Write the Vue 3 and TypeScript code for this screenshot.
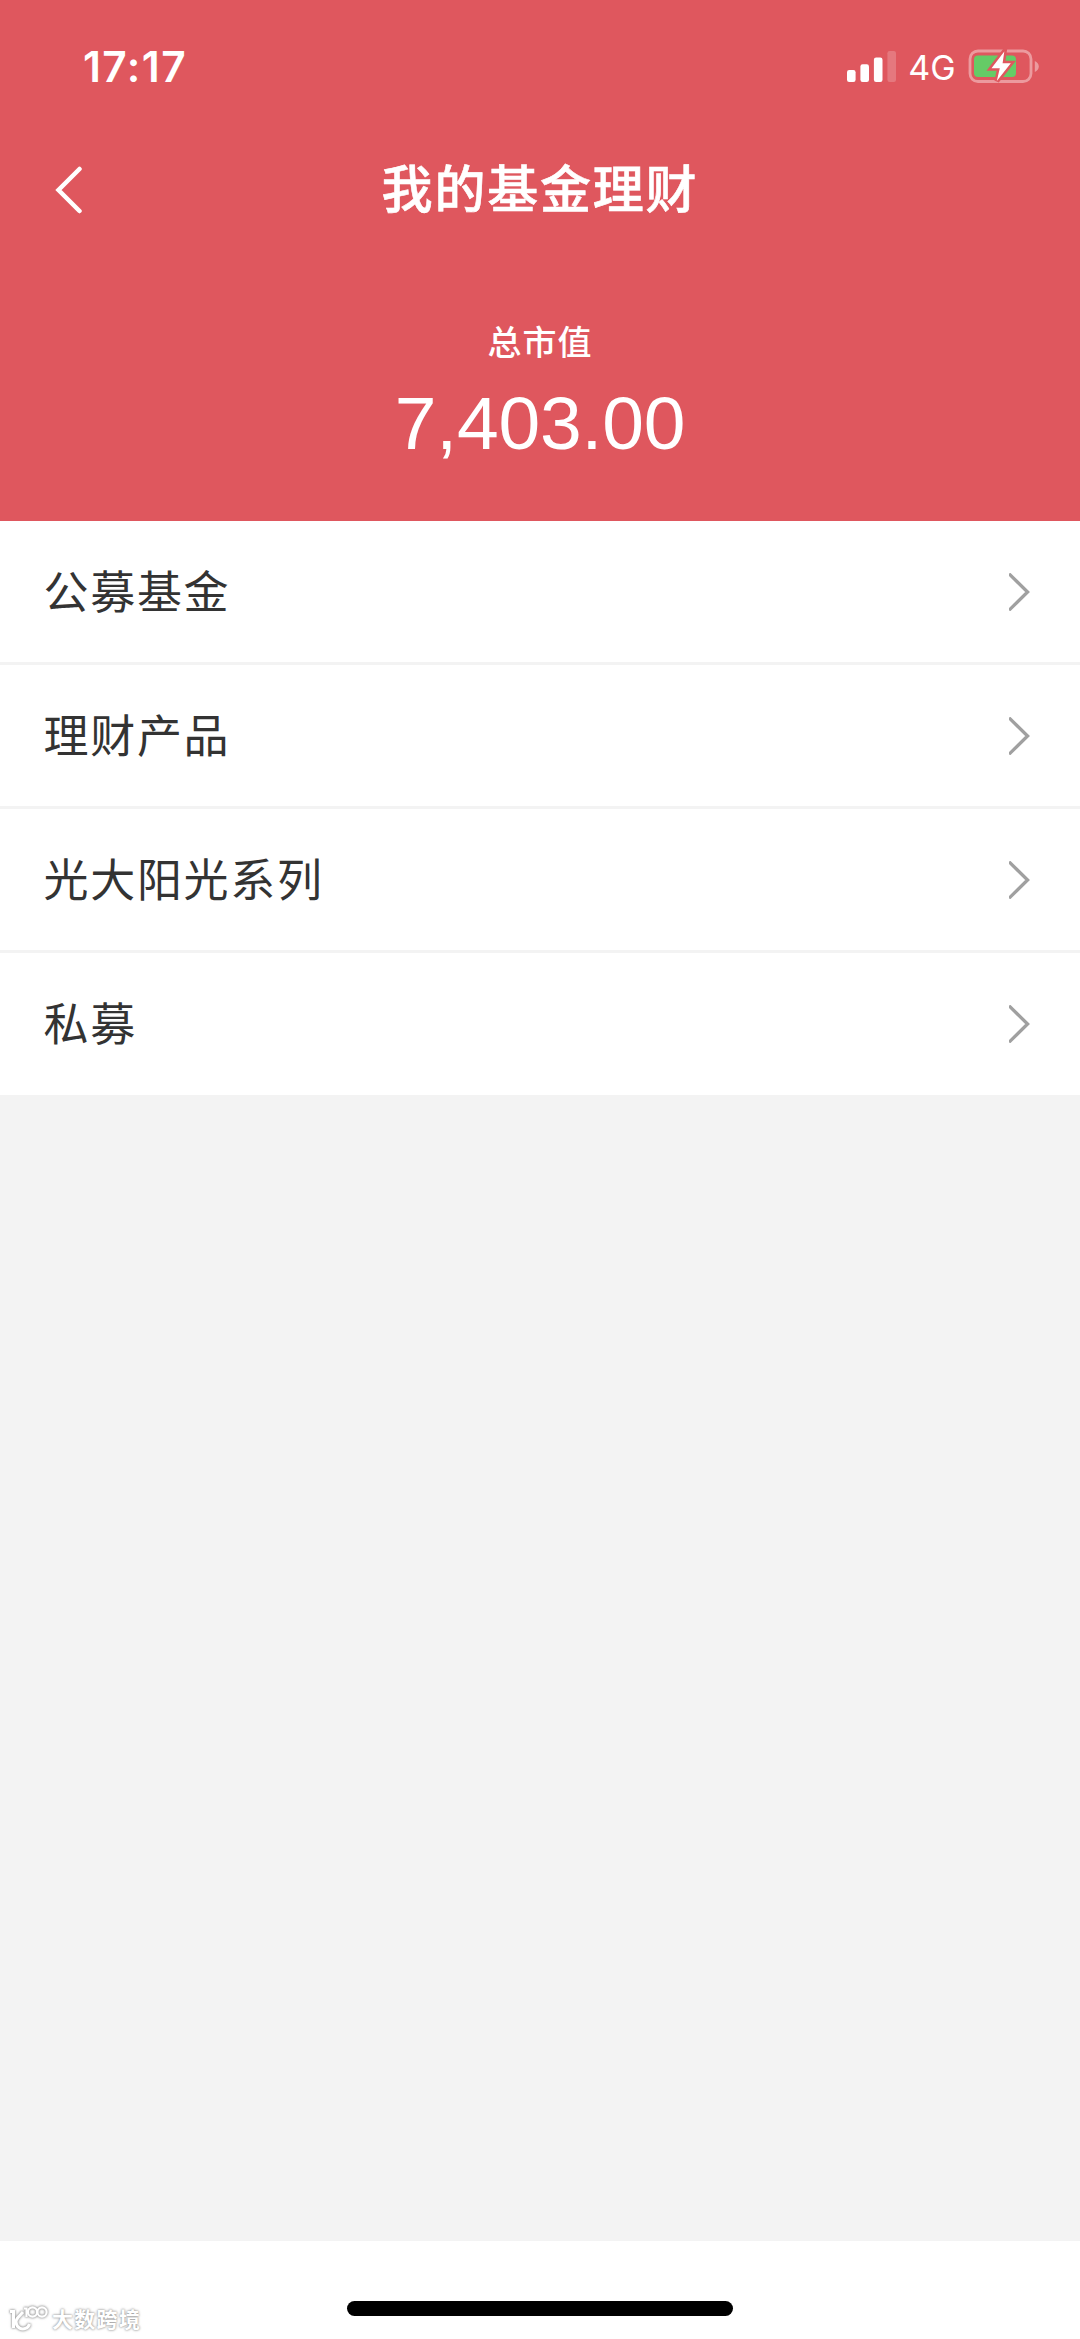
<script setup lang="ts">
interface Category {
  id: string
  name: string
}

const totalValue = '7,403.00'

const categories: Category[] = [
  { id: 'public', name: '公募基金' },
  { id: 'wealth', name: '理财产品' },
  { id: 'sunshine', name: '光大阳光系列' },
  { id: 'private', name: '私募' },
]
</script>

<template>
  <div class="screen">
    <header class="hero">
      <div class="status">
        <span class="time">17:17</span>
        <div class="indicators">
          <svg class="signal" width="50" height="32" viewBox="0 0 50 32" fill="#fff">
            <rect x="0" y="20" width="8.6" height="12" rx="2.2" />
            <rect x="13.4" y="14.2" width="8.6" height="17.8" rx="2.2" />
            <rect x="26.9" y="7.5" width="8.6" height="24.5" rx="2.2" />
            <rect x="40.4" y="1" width="8.6" height="31" rx="2.2" opacity="0.2" />
          </svg>
          <span class="network">4G</span>
          <svg class="battery" width="72" height="36" viewBox="0 0 72 36">
            <rect x="2" y="3" width="61" height="30.5" rx="8" fill="none" stroke="#fff" stroke-opacity="0.4" stroke-width="2.8" />
            <path d="M66.800 13v11c2.400-1 4-3 4-5.500s-1.600-4.500-4-5.500z" fill="#fff" fill-opacity="0.4" />
            <rect x="6" y="7.500" width="42" height="21.500" rx="4" fill="#65cb66" />
            <path d="M36.300 3.500L23.500 20.300h8.300L28.800 33L42.800 15.300H34.600z" fill="#fff" stroke="#df575e" stroke-width="5" paint-order="stroke" />
          </svg>
        </div>
      </div>
      <nav class="navbar">
        <button class="back" aria-label="返回">
          <svg width="30" height="48" viewBox="0 0 30 48" fill="none" stroke="#fff" stroke-width="4.500">
            <path d="M25.500 3L4.500 24L25.500 45" stroke-linecap="round" />
          </svg>
        </button>
        <h1 class="title">我的基金理财</h1>
      </nav>
      <div class="caption">总市值</div>
      <div class="amount">{{ totalValue }}</div>
    </header>

    <ul class="list">
      <li v-for="item in categories" :key="item.id" class="row">
        <span class="name">{{ item.name }}</span>
        <svg width="21" height="38" viewBox="0 0 21 38" fill="none" stroke="#a0a0a0" stroke-width="3.300">
          <path d="M0 0.800L18.600 19L0 37.200" />
        </svg>
      </li>
    </ul>

    <footer class="bottom">
      <div class="home-bar"></div>
      <div class="watermark">
        <svg width="44" height="30" viewBox="0 0 44 30" fill="none" stroke="#fff" stroke-width="3">
          <path d="M3 8.500H6.500V25" />
          <path d="M16 9L11 14.500A6.800 6.800 0 1 0 22.500 21" />
          <path d="M17 5.500H19.500V14" stroke-width="2.200" />
          <circle cx="25.500" cy="9" r="4.600" stroke-width="2.200" />
          <circle cx="35" cy="9" r="4.600" stroke-width="2.200" />
        </svg>
        <span>大数跨境</span>
      </div>
    </footer>
  </div>
</template>

<style>
body {
  margin: 0;
}
</style>

<style scoped>
.screen {
  width: 1080px;
  height: 2339px;
  display: flex;
  flex-direction: column;
  overflow: hidden;
  background: #f3f3f3;
  font-family: "Noto Sans CJK SC", sans-serif;
}

.hero {
  height: 521.400px;
  flex: none;
  background: #df575e;
  color: #fff;
  text-align: center;
}

.status {
  height: 132px;
  box-sizing: border-box;
  display: flex;
  justify-content: space-between;
  padding: 0 40px 0 83px;
  font-family: Inter, sans-serif;
}

.time {
  margin-top: 41px;
  font-size: 42.500px;
  line-height: 51px;
  font-weight: 600;
  letter-spacing: 1.400px;
}

.indicators {
  display: flex;
  align-items: flex-start;
}

.signal {
  margin-top: 50px;
}

.network {
  margin: 47px 0 0 7px;
  width: 56px;
  font-size: 34px;
  line-height: 41px;
  text-align: center;
}

.battery {
  margin: 48px 0 0 8px;
}

.navbar {
  height: 116px;
  display: grid;
  grid-template-columns: 160px 1fr 160px;
  align-items: center;
}

.back {
  width: 30px;
  height: 48px;
  margin-left: 54px;
  padding: 0;
  border: 0;
  background: none;
}

.back svg {
  display: block;
}

.title {
  margin: 0;
  padding-bottom: 8px;
  font-size: 51px;
  line-height: 74px;
  font-weight: 500;
  letter-spacing: 1.800px;
  -webkit-text-stroke: 0.600px #fff;
}

.caption {
  margin-top: 68px;
  font-size: 34px;
  line-height: 50px;
  font-weight: 500;
  letter-spacing: 1px;
}

.amount {
  margin-top: 14px;
  font-family: "Liberation Sans", sans-serif;
  font-size: 75px;
  line-height: 86px;
  letter-spacing: -0.200px;
}

.list {
  flex: none;
  margin: 0;
  padding: 0;
  list-style: none;
  background: #fff;
}

.row {
  box-sizing: border-box;
  height: 144px;
  display: flex;
  align-items: center;
  justify-content: space-between;
  padding: 0 50px 0 43.500px;
  border-bottom: 3px solid #f3f3f3;
  color: #333;
  font-size: 45px;
  letter-spacing: 1.700px;
}

.name {
  padding-bottom: 5px;
}

.row:last-child {
  height: 142px;
  border-bottom: 0;
}

.bottom {
  position: relative;
  display: flow-root;
  height: 98px;
  flex: none;
  margin-top: auto;
  background: #fff;
}

.home-bar {
  width: 386px;
  height: 15px;
  margin: 60px auto 0;
  border-radius: 8px;
  background: #000;
}

.watermark {
  position: absolute;
  left: 7px;
  bottom: 6px;
  display: flex;
  align-items: center;
  gap: 1px;
  color: #fff;
  font-size: 21px;
  line-height: 30px;
  font-weight: 700;
  letter-spacing: 1.300px;
  text-shadow: 0 0 2px #999, 0 0 3px #aaa;
}

.watermark svg {
  filter: drop-shadow(0 0 1px #999) drop-shadow(0 0 1px #bbb);
}
</style>
